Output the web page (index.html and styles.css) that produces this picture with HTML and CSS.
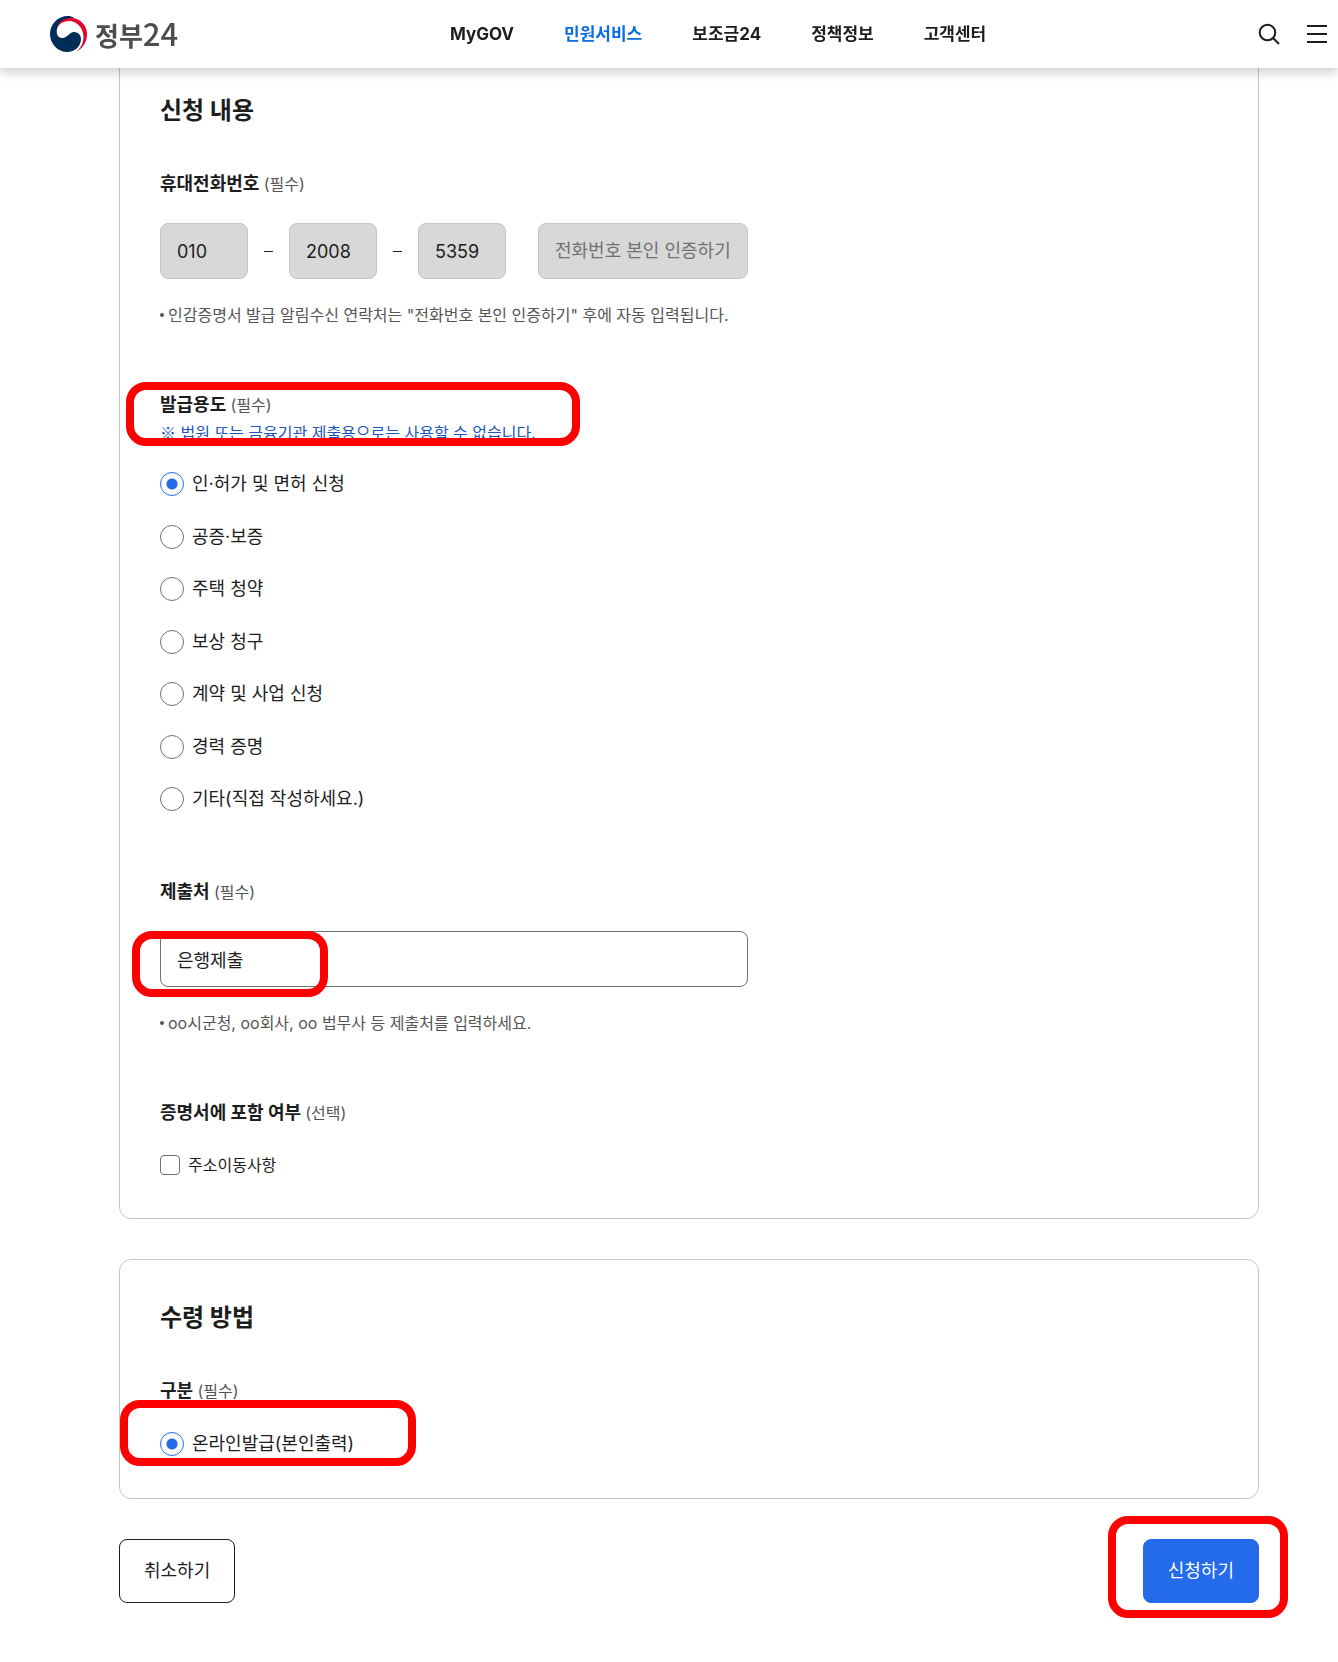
FILE: index.html
```html
<!DOCTYPE html>
<html lang="ko">
<head>
    <meta charset="utf-8">
    <title>정부24</title>
    <link rel="stylesheet" href="styles.css">
</head>
<body>
    <header class="header">
        <a class="logo" href="#">
            <svg width="37" height="36" viewBox="0 0 37 36" aria-hidden="true">
                <path fill="#002d56" d="M18 0C8 0 0 8 0 18s8 18 17 18c8 0 14-6 14-13 0-4-3-7-7-7-5 0-6 6-12 6-4 0-6-4-5-9C9 6 16 2 24 2 22 .5 20 0 18 0Z"/>
                <path fill="#e4032e" d="M7 11C9 5 15 2 21 2c9 0 16 7 16 16 0 8-4 14-11 18 5-4 7.500-9 7.500-15C33.500 12 27 5 19 5 14 5 10 7 7 11Z"/>
            </svg>
            <span class="logo-text">정부<span class="logo-num">24</span></span>
        </a>
        <nav class="nav">
            <a href="#">MyGOV</a>
            <a href="#" class="active">민원서비스</a>
            <a href="#">보조금24</a>
            <a href="#">정책정보</a>
            <a href="#">고객센터</a>
        </nav>
        <div class="tools">
            <button type="button" aria-label="검색">
                <svg width="22" height="22" viewBox="0 0 22 22" fill="none" stroke="#1d1d1d" stroke-width="2">
                    <circle cx="9.500" cy="9.500" r="7.800"/>
                    <path d="M15 15l6 6"/>
                </svg>
            </button>
            <button type="button" aria-label="전체메뉴">
                <svg width="20" height="22" viewBox="0 0 20 22" fill="none" stroke="#1d1d1d" stroke-width="2">
                    <path d="M0 3h20M0 11h20M0 19h20"/>
                </svg>
            </button>
        </div>
    </header>

    <main class="main">
        <form action="#" method="post">
            <section class="card">
                <h2>신청 내용</h2>

                <div class="field">
                    <label class="label" for="tel1">휴대전화번호 <span>(필수)</span></label>
                    <div class="phone">
                        <input type="text" id="tel1" value="010" readonly>
                        <i class="dash"></i>
                        <input type="text" aria-label="가운데 번호" value="2008" readonly>
                        <i class="dash"></i>
                        <input type="text" aria-label="마지막 번호" value="5359" readonly>
                        <button type="button" class="verify" disabled>전화번호 본인 인증하기</button>
                    </div>
                    <p class="hint">인감증명서 발급 알림수신 연락처는 "전화번호 본인 인증하기" 후에 자동 입력됩니다.</p>
                </div>

                <div class="field">
                    <div class="label" id="use-label">발급용도 <span>(필수)</span></div>
                    <p class="note">※ 법원 또는 금융기관 제출용으로는 사용할 수 없습니다.</p>
                    <ul class="choices" role="radiogroup" aria-labelledby="use-label">
                        <li><input type="radio" name="use" id="use1" checked><label for="use1">인·허가 및 면허 신청</label></li>
                        <li><input type="radio" name="use" id="use2"><label for="use2">공증·보증</label></li>
                        <li><input type="radio" name="use" id="use3"><label for="use3">주택 청약</label></li>
                        <li><input type="radio" name="use" id="use4"><label for="use4">보상 청구</label></li>
                        <li><input type="radio" name="use" id="use5"><label for="use5">계약 및 사업 신청</label></li>
                        <li><input type="radio" name="use" id="use6"><label for="use6">경력 증명</label></li>
                        <li><input type="radio" name="use" id="use7"><label for="use7">기타(직접 작성하세요.)</label></li>
                    </ul>
                    <div class="mark mark-use"></div>
                </div>

                <div class="field">
                    <label class="label" for="submit-to">제출처 <span>(필수)</span></label>
                    <div class="text-box">
                        <input type="text" id="submit-to" value="은행제출">
                        <div class="mark mark-to"></div>
                    </div>
                    <p class="hint">oo시군청, oo회사, oo 법무사 등 제출처를 입력하세요.</p>
                </div>

                <div class="field">
                    <div class="label">증명서에 포함 여부 <span>(선택)</span></div>
                    <div class="check">
                        <input type="checkbox" id="addr"><label for="addr">주소이동사항</label>
                    </div>
                </div>
            </section>

            <section class="card">
                <h2>수령 방법</h2>
                <div class="field">
                    <div class="label" id="get-label">구분 <span>(필수)</span></div>
                    <ul class="choices" role="radiogroup" aria-labelledby="get-label">
                        <li><input type="radio" name="get" id="get1" checked><label for="get1">온라인발급(본인출력)</label></li>
                    </ul>
                    <div class="mark mark-get"></div>
                </div>
            </section>

            <div class="buttons">
                <button type="button" class="btn">취소하기</button>
                <div class="submit">
                    <button type="submit" class="btn btn-primary">신청하기</button>
                    <div class="mark mark-submit"></div>
                </div>
            </div>
        </form>
    </main>
</body>
</html>
```

FILE: styles.css
```css
* {
    box-sizing: border-box;
}

body {
    margin: 0;
    background-color: #fff;
    color: #1d1d1d;
    font-family: Inter, "Noto Sans CJK KR", sans-serif;
    font-size: 18px;
    line-height: 28px;
}

h2, p, ul {
    margin: 0;
    padding: 0;
}

a {
    color: inherit;
    text-decoration: none;
}

button, input {
    font: inherit;
    color: inherit;
    margin: 0;
}

/* header */
.header {
    position: fixed;
    top: 0;
    left: 0;
    right: 0;
    z-index: 10;
    display: flex;
    justify-content: space-between;
    align-items: center;
    height: 68px;
    padding: 0 11px 0 50px;
    background-color: #fff;
    box-shadow: 0 4px 10px rgba(0, 0, 0, 0.2);
}

.logo {
    display: flex;
    align-items: center;
    gap: 8px;
}

.logo-text {
    font-family: "Noto Sans CJK KR", sans-serif;
    font-size: 26px;
    font-weight: 700;
    color: #4d4d4d;
}

.logo-num {
    font-size: 31px;
    font-weight: 500;
}

.nav {
    display: flex;
    gap: 50px;
    font-size: 17px;
    font-weight: 700;
}

.nav .active {
    color: #0b6be6;
}

.tools {
    display: flex;
    gap: 27px;
}

.tools button {
    display: flex;
    padding: 0;
    border: 0;
    background: none;
}

/* cards */
.main {
    padding: 52px 79px 56px 119px;
}

.card {
    margin-bottom: 40px;
    padding: 40px;
    border: 1px solid #c6c6c6;
    border-radius: 12px;
}

.card h2 {
    margin-bottom: 41px;
    font-size: 24px;
    font-weight: 700;
    line-height: 36px;
}

.field {
    position: relative;
}

.field + .field {
    margin-top: 64px;
}

.label {
    display: block;
    margin-bottom: 25px;
    font-weight: 700;
}

.label span {
    font-size: 16px;
    font-weight: 400;
    color: #555;
}

.hint {
    display: flex;
    align-items: center;
    gap: 4px;
    margin-top: 24px;
    font-size: 16px;
    line-height: 24px;
    color: #555;
}

.hint::before {
    content: "";
    width: 4px;
    height: 4px;
    border-radius: 50%;
    background-color: #555;
}

.label:has(+ .note) {
    margin-bottom: 0;
}

.note {
    margin-bottom: 25px;
    font-family: "Noto Sans CJK KR", sans-serif;
    font-size: 16px;
    line-height: 26px;
    color: #1d56bc;
}

/* inputs */
.phone {
    display: flex;
    align-items: center;
    gap: 16px;
}

.phone input, .verify, .text-box input {
    height: 56px;
    padding: 0 16px;
    border: 1px solid #c6c6c6;
    border-radius: 8px;
    background-color: #d8d8d8;
}

.phone input {
    width: 88px;
}

.dash {
    width: 9px;
    height: 1px;
    background-color: #1d1d1d;
}

.verify {
    margin-left: 16px;
    color: #717171;
}

.text-box {
    position: relative;
    max-width: 588px;
}

.text-box input {
    display: block;
    width: 100%;
    border-color: #717171;
    background-color: #fff;
}

.choices {
    display: flex;
    flex-direction: column;
    gap: 24px;
    font-size: 19px;
    list-style: none;
}

.choices li {
    display: flex;
    align-items: center;
    gap: 8px;
    min-height: 1.5em;
}

.choices label {
    font-size: 18px;
}

.choices input {
    appearance: none;
    width: 24px;
    height: 24px;
    border: 1px solid #717171;
    border-radius: 50%;
    background-color: #fff;
}

.choices input:checked {
    border-color: #246beb;
    background-image: radial-gradient(circle, #246beb 5px, transparent 6px);
}

.check {
    display: flex;
    align-items: center;
    gap: 8px;
    font-size: 16px;
    line-height: 26px;
}

.check input {
    appearance: none;
    width: 20px;
    height: 20px;
    border: 1px solid #717171;
    border-radius: 4px;
}

/* buttons */
.buttons {
    display: flex;
    justify-content: space-between;
}

.btn {
    display: block;
    height: 64px;
    padding: 0 24px;
    border: 1px solid #1d1d1d;
    border-radius: 8px;
    background-color: #fff;
}

.btn-primary {
    border-color: #246beb;
    background-color: #246beb;
    color: #fff;
}

.submit {
    position: relative;
}

/* red highlight boxes over the form */
.mark {
    position: absolute;
    border: 8px solid #f00;
    border-radius: 20px;
    pointer-events: none;
}

.mark-use {
    top: -9px;
    left: -34px;
    width: 454px;
    height: 64px;
}

.mark-to {
    top: 0;
    left: -28px;
    width: 196px;
    height: 66px;
}

.mark-get {
    top: 23px;
    left: -40px;
    width: 296px;
    height: 66px;
}

.mark-submit {
    top: -23px;
    left: -35px;
    width: 180px;
    height: 102px;
}
```
